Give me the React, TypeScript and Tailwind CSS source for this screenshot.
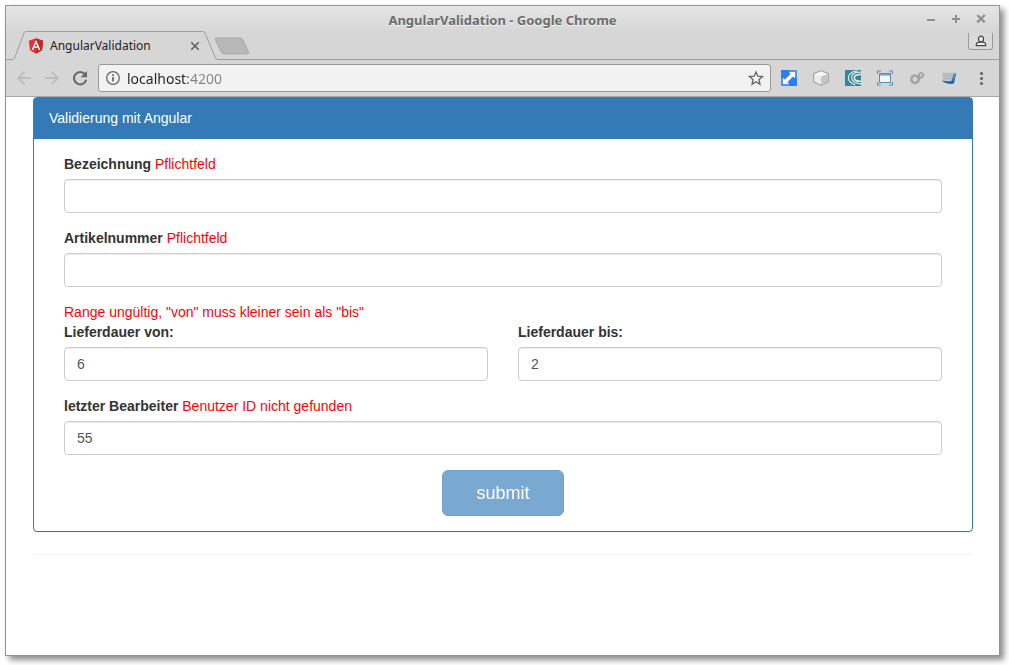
import { useState } from "react";
import type { ReactNode } from "react";

function AngularLogo() {
  return (
    <svg viewBox="27 26 196 208" className="h-4 w-4 shrink-0" aria-hidden="true">
      <path d="M125 30 31.9 63.2l14.2 123.1L125 230l78.9-43.7 14.2-123.1z" fill="#e23237" />
      <path d="M125 30v200l78.9-43.7 14.2-123.1z" fill="#b52e31" />
      <path
        d="M125 52.1 66.8 182.6h21.7l11.7-29.2h49.4l11.7 29.2H183L125 52.1zm17 83.3h-34l17-40.9 17 40.9z"
        fill="#fff"
      />
    </svg>
  );
}

function TitleBar() {
  return (
    <header className="grid h-[25px] grid-cols-[1fr_auto_1fr] items-center pr-[10px]">
      <span />
      <h1 className="pl-[10px] pt-[3px] text-[13px] leading-5 font-bold text-[#6c6c6c] [text-shadow:0_1px_0_#f5f5f5]">
        AngularValidation - Google Chrome
      </h1>
      <div className="flex justify-end gap-[9px] text-[#8f8f8f]">
        <button type="button" aria-label="Minimize" className="h-4 w-4">
          <svg viewBox="0 0 16 16" className="h-4 w-4" stroke="currentColor" strokeWidth="2">
            <path d="M4 9h8" />
          </svg>
        </button>
        <button type="button" aria-label="Maximize" className="h-4 w-4">
          <svg viewBox="0 0 16 16" className="h-4 w-4" stroke="currentColor" strokeWidth="2">
            <path d="M4 8h8M8 4v8" />
          </svg>
        </button>
        <button type="button" aria-label="Close" className="h-4 w-4">
          <svg viewBox="0 0 16 16" className="h-4 w-4" stroke="currentColor" strokeWidth="2.2">
            <path d="m4.300 4 7.400 7.400M11.700 4l-7.400 7.400" />
          </svg>
        </button>
      </div>
    </header>
  );
}

function TabStrip() {
  return (
    <div className="flex h-[29px] items-start border-b border-[#9f9f9f] pr-[6px] pl-[6px]">
      <div className="relative flex h-[29px] w-[206px] items-center pr-[18px] pl-[16px]">
        <svg viewBox="0 0 206 29" className="absolute inset-0 h-[29px] w-[206px]" aria-hidden="true">
          <path
            d="M0 28.500h.5Q2 28.500 2.800 26.500L12 2Q12.600.5 14 .5h177Q192.400.5 193 2l10.500 25q.7 1.500 2.500 1.500V29H0z"
            fill="#d6d6d6"
          />
          <path
            d="M0 28.500h.5Q2 28.500 2.800 26.500L12 2Q12.600.5 14 .5h177Q192.400.5 193 2l10.500 25q.7 1.500 2.500 1.500"
            fill="none"
            stroke="#9f9f9f"
          />
        </svg>
        <a href="#page" className="relative flex flex-1 items-center gap-[6px] text-[12px] leading-4 text-[#222]">
          <AngularLogo />
          AngularValidation
        </a>
        <button type="button" aria-label="Close tab" className="relative h-[10px] w-[10px] text-[#5f5f5f]">
          <svg viewBox="0 0 10 10" className="h-[10px] w-[10px]" stroke="currentColor" strokeWidth="1.6">
            <path d="m1.300 1.300 7.400 7.400M8.700 1.300 1.300 8.700" />
          </svg>
        </button>
      </div>
      <button type="button" aria-label="New tab" className="mt-[6px] -ml-[4px] h-[18px] w-[36px]">
        <svg viewBox="0 0 36 18" className="h-[18px] w-[36px]">
          <path
            d="M2.500 1h23.500q2 0 2.800 1.800l5.500 12q.8 2-1.300 2H10q-2 0-2.800-1.800l-5.700-12Q.8 1 2.500 1z"
            fill="#b8b8b8"
            stroke="#a5a5a5"
          />
        </svg>
      </button>
      <button
        type="button"
        aria-label="Profile"
        className="mt-[2px] ml-auto flex h-[17px] w-[25px] items-center justify-center rounded-b-[3px] border border-t-0 border-[#9a9a9a] bg-[#dadada]"
      >
        <svg viewBox="0 0 12 12" className="h-3 w-3" fill="#f0f0f0" stroke="#444" strokeWidth="1.200">
          <path d="M1.300 10.600V9.300q0-1.500 2.600-2.200h4.200q2.600.7 2.600 2.200v1.300z" />
          <ellipse cx="6" cy="4" rx="2.500" ry="2.900" />
        </svg>
      </button>
    </div>
  );
}

function ToolButton({ label, children }: { label: string; children: ReactNode }) {
  return (
    <button type="button" aria-label={label} className="h-4 w-4 shrink-0">
      <svg viewBox="0 0 16 16" className="h-4 w-4" fill="none">
        {children}
      </svg>
    </button>
  );
}

function Toolbar() {
  const [address, setAddress] = useState("localhost:4200");
  return (
    <div className="flex h-[37px] items-center border-b border-[#a8a8a8] pr-[10px] pl-[10px]">
      <div className="flex gap-3">
        <ToolButton label="Back">
          <path d="M15 8H2.500M8.500 1.700 2.200 8l6.300 6.300" stroke="#bdbdbd" strokeWidth="1.800" />
        </ToolButton>
        <ToolButton label="Forward">
          <path d="M1 8h12.500M7.500 1.700 13.800 8l-6.300 6.300" stroke="#bdbdbd" strokeWidth="1.800" />
        </ToolButton>
        <ToolButton label="Reload">
          <path d="M13 4.200A6.200 6.200 0 1 0 14.200 9.800" stroke="#666" strokeWidth="2" />
          <path d="M15 1v6.300H8.700z" fill="#666" />
        </ToolButton>
      </div>
      <div className="ml-[10px] flex h-7 min-w-0 flex-1 items-center rounded-[3px] border border-[#999] bg-[#f2f2f2] px-[6px]">
        <ToolButton label="Site information">
          <circle cx="8" cy="8" r="6.300" stroke="#666" strokeWidth="1.300" />
          <path d="M8 7v4.500M8 4.300v1.600" stroke="#5c5c5c" strokeWidth="1.600" />
        </ToolButton>
        <input
          aria-label="Address"
          value={address}
          onChange={(e) => setAddress(e.target.value)}
          className="ml-[6px] h-6 min-w-0 flex-1 bg-[linear-gradient(90deg,#222_61px,#858585_61px)] bg-clip-text text-[14px] text-transparent outline-none"
        />
        <ToolButton label="Bookmark">
          <path
            d="m8 1.900 1.800 4.300 4.700.4-3.600 3.100 1.100 4.600L8 11.800l-4 2.500 1.100-4.600L1.500 6.600l4.700-.4z"
            stroke="#666"
            strokeWidth="1.300"
          />
        </ToolButton>
      </div>
      <div className="ml-[10px] flex gap-4">
        <ToolButton label="Resize">
          <path d="M0 0h16v16H0z" fill="#4b96fb" />
          <path d="M0 0h8v8H0zM8 8h8v8H8z" fill="#2f7df2" />
          <path d="M8 2h6v6l-1.800-1.800-6 6L8 14H2V8l1.800 1.800 6-6z" fill="#fff" />
        </ToolButton>
        <ToolButton label="Cube">
          <path d="m8 .7 7.300 2.800v8.300L8 15.400.7 11.800V3.500z" fill="#e0e0e0" stroke="#999" />
          <path d="M1.500 4 8 1.500 14.500 4 8 6.800z" fill="#f5f5f5" />
          <path d="M8 6.800 14.500 4v7.300L8 14.500z" fill="#c6c6c6" />
          <path d="M1.500 4 8 6.800v7.700l-6.500-3.200z" fill="#ececec" />
        </ToolButton>
        <ToolButton label="Swirl">
          <path d="M0 0h16v16H0z" fill="#388797" />
          <path
            d="M12 .8C6 1.500 2.800 5 3.500 8.700c.6 3 3.300 5.200 6.800 6.200M16 2.300C10 1.500 6 4.500 6.700 8.200c.6 3.200 4 5.300 9.300 5.700"
            stroke="#e8f3f5"
            strokeWidth="1.100"
          />
          <path d="M16 4.500C11.500 4 8.800 6 9.400 8.500c.5 2 3 3 6.600 2.800" stroke="#e8f3f5" strokeWidth="1.500" />
        </ToolButton>
        <ToolButton label="Capture">
          <path d="M.5 4V1H4M12 1h3.500v3M15.500 12v3H12M4 15H.5v-3" stroke="#5e8fbd" strokeWidth="1.200" />
          <rect x="2.500" y="3.500" width="11" height="9" fill="#f4f4f4" stroke="#5b8cba" />
          <path d="M3 4h10v1.600H3z" fill="#76a3cd" />
        </ToolButton>
        <ToolButton label="Settings gears">
          <circle cx="6" cy="9.300" r="4.300" stroke="#a0a0a0" strokeWidth="1.800" strokeDasharray="1.500 .75" />
          <circle cx="6" cy="9.300" r="3.200" stroke="#a0a0a0" strokeWidth="1.500" />
          <circle cx="12" cy="5.300" r="2.600" stroke="#a0a0a0" strokeWidth="1.500" strokeDasharray="1.200 .6" />
          <circle cx="12" cy="5.300" r="1.800" stroke="#a0a0a0" strokeWidth="1.200" />
        </ToolButton>
        <ToolButton label="Notes">
          <path d="M1.500 2.500h11.300l-1.500 8.300H1.500z" fill="#bfc1c2" />
          <path d="M2 4.500h10M2 6.500h9.500M2 8.500h9" stroke="#aeb1b3" strokeWidth=".6" />
          <path d="M.8 10.800q5 .8 9.700.2L13 3.500h2l-1.700 8.700q-.4 1.800-2.200 1.800Q5 14 .8 10.800z" fill="#1765ad" />
          <path d="m11.500 10.500 1.500.3 1.700-7.300h-1.300z" fill="#3d91d6" />
        </ToolButton>
        <ToolButton label="Menu">
          <circle cx="8.500" cy="3.500" r="1.600" fill="#666" />
          <circle cx="8.500" cy="8.500" r="1.600" fill="#666" />
          <circle cx="8.500" cy="13.500" r="1.600" fill="#666" />
        </ToolButton>
      </div>
    </div>
  );
}

type FieldProps = { id: string; label: string; error?: string; initial?: string };

function Field({ id, label, error, initial = "" }: FieldProps) {
  const [value, setValue] = useState(initial);
  return (
    <div className="mb-[15px]">
      <div className="mb-[5px]">
        <label htmlFor={id} className="font-bold">
          {label}
        </label>
        {error && <span className="text-[#f00]"> {error}</span>}
      </div>
      <input
        id={id}
        value={value}
        onChange={(e) => setValue(e.target.value)}
        className="block h-[34px] w-full rounded-[4px] border border-[#ccc] bg-white px-3 text-[14px] text-[#555] shadow-[inset_0_1px_1px_rgba(0,0,0,0.075)] outline-none focus:border-[#66afe9]"
      />
    </div>
  );
}

function ValidationPage() {
  return (
    <main
      id="page"
      className="flex-1 bg-white pr-[26px] pl-[27px] font-['Liberation_Sans',Arial,sans-serif] text-[14px] leading-5 text-[#333]"
    >
      <section className="rounded-[4px] border border-[#337ab7] shadow-[0_1px_1px_rgba(0,0,0,0.05)]">
        <h2 className="border-b border-[#337ab7] bg-[#337ab7] px-[15px] py-[10px] text-white">
          Validierung mit Angular
        </h2>
        <form className="px-[30px] py-[15px]" onSubmit={(e) => e.preventDefault()}>
          <Field id="name" label="Bezeichnung" error="Pflichtfeld" />
          <Field id="number" label="Artikelnummer" error="Pflichtfeld" />
          <p className="text-[#f00]">Range ungültig, "von" muss kleiner sein als "bis"</p>
          <div className="grid grid-cols-2 gap-[30px]">
            <Field id="from" label="Lieferdauer von:" initial="6" />
            <Field id="to" label="Lieferdauer bis:" initial="2" />
          </div>
          <Field id="editor" label="letzter Bearbeiter" error="Benutzer ID nicht gefunden" initial="55" />
          <div className="flex justify-center">
            <button
              type="submit"
              disabled
              className="h-[46px] rounded-[6px] border border-[#2e6da4] bg-[#337ab7] px-[33px] text-[18px] text-white opacity-65"
            >
              submit
            </button>
          </div>
        </form>
      </section>
      <hr className="mt-[22px] border-[#f2f2f2]" />
    </main>
  );
}

export default function App() {
  return (
    <div className="flex min-h-screen flex-col bg-white pt-[5px] pr-[9px] pb-[9px] pl-[5px] font-['Noto_Sans',sans-serif]">
      <div className="flex flex-1 flex-col border border-[#949494] bg-[#d6d6d6] shadow-[4px_4px_6px_rgba(0,0,0,0.45)]">
        <div className="bg-linear-to-b from-[#e5e5e5] to-[#d6d6d6] to-[26px]">
          <TitleBar />
          <TabStrip />
        </div>
        <Toolbar />
        <ValidationPage />
      </div>
    </div>
  );
}
